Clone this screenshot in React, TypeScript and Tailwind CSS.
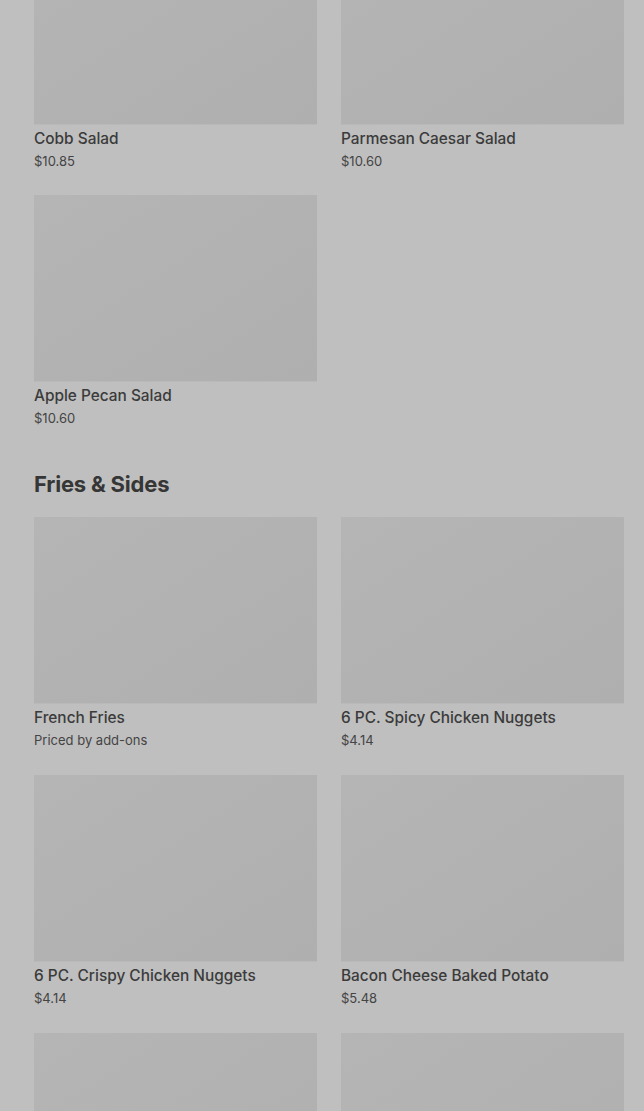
import React from "react";

type Item = { name: string; price: string };

const salads: Item[] = [
  { name: "Cobb Salad", price: "$10.85" },
  { name: "Parmesan Caesar Salad", price: "$10.60" },
  { name: "Apple Pecan Salad", price: "$10.60" },
];

const sides: Item[] = [
  { name: "French Fries", price: "Priced by add-ons" },
  { name: "6 PC. Spicy Chicken Nuggets", price: "$4.14" },
  { name: "6 PC. Crispy Chicken Nuggets", price: "$4.14" },
  { name: "Bacon Cheese Baked Potato", price: "$5.48" },
  { name: "Chili", price: "$3.59" },
  { name: "Baked Potato", price: "$3.19" },
];

function Card({ item }: { item: Item }) {
  return (
    <div className="flex flex-col">
      <div className="h-[187px] w-full bg-gradient-to-br from-[#b5b5b5] to-[#afafaf] border-b border-[#b9b9b9]" />
      <div className="mt-[4px] text-[15.4px] leading-[20px] font-medium text-[#3b3b3b]">
        {item.name}
      </div>
      <div className="mt-[3px] text-[13px] leading-[18px] text-[#444444]">
        {item.price}
      </div>
    </div>
  );
}

export default function App() {
  return (
    <div
      className="h-[1111px] w-[644px] overflow-hidden bg-[#bfbfbf]"
      style={{ fontFamily: "Inter, 'Noto Sans', sans-serif" }}
    >
      <div className="-mt-[62px] pl-[34px] pr-[20px]">
        <div className="grid grid-cols-2 gap-x-[24px] gap-y-[25px]">
          {salads.map((it) => (
            <Card key={it.name} item={it} />
          ))}
        </div>
        <h2 className="mt-[43px] text-[22px] leading-[28px] font-bold text-[#363636] tracking-[-0.2px]">
          Fries &amp; Sides
        </h2>
        <div className="mt-[19px] grid grid-cols-2 gap-x-[24px] gap-y-[26px]">
          {sides.map((it) => (
            <Card key={it.name} item={it} />
          ))}
        </div>
      </div>
    </div>
  );
}
